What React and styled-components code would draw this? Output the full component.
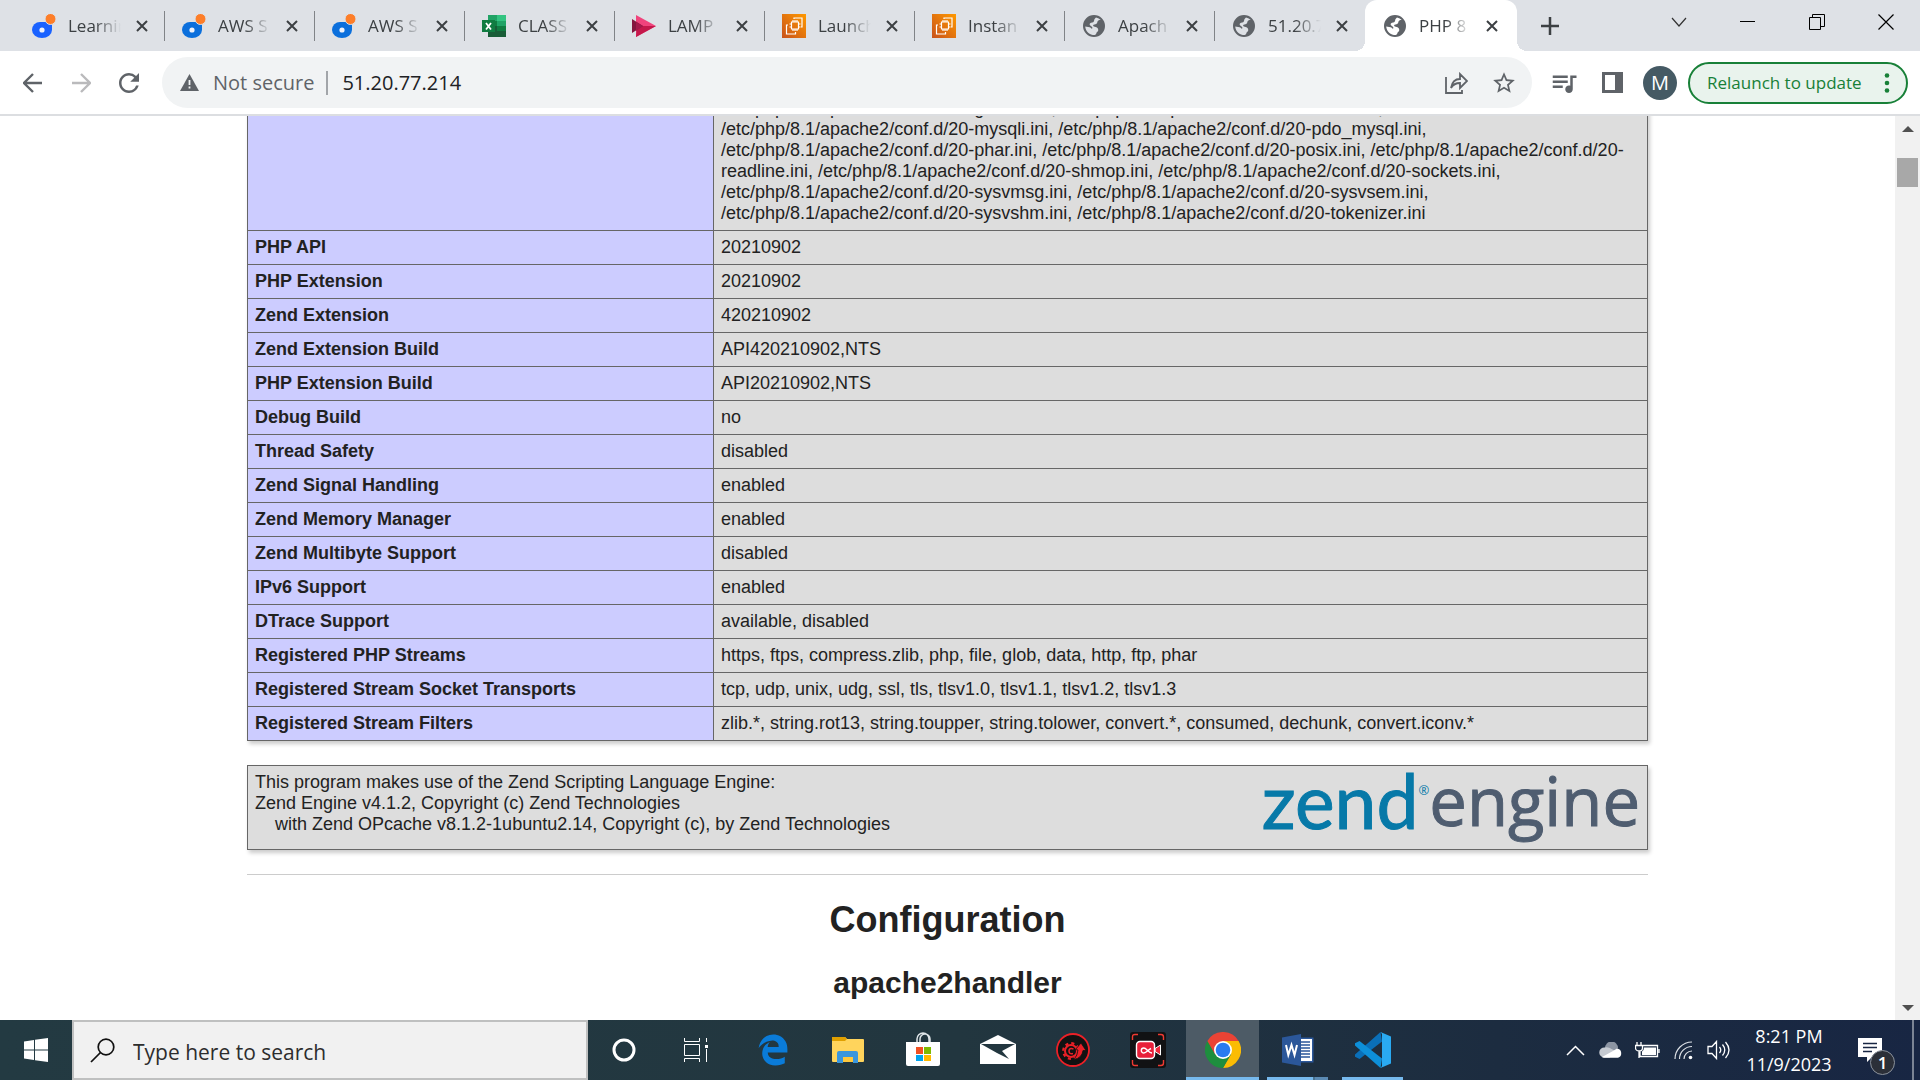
import React from 'react';
import styled, { createGlobalStyle, css } from 'styled-components';
import { FaEdgeLegacy } from 'react-icons/fa';
import { MdQueueMusic, MdStarBorder, MdRefresh } from 'react-icons/md';

const uiFont = "'Open Sans', 'Noto Sans', sans-serif";
const pageFont = "'Liberation Sans', Arial, Helvetica, sans-serif";

const GlobalStyle = createGlobalStyle`
  *, *::before, *::after { box-sizing: border-box; }
  body { margin: 0; background: #fff; color: #222; font-family: ${pageFont}; }
  button { font: inherit; color: inherit; border: 0; padding: 0; margin: 0; background: none; cursor: pointer; }
  input { font: inherit; color: inherit; border: 0; padding: 0; margin: 0; background: none; outline: 0; }
  svg { display: block; flex: none; }
`;

const Screen = styled.div`
  display: flex;
  flex-direction: column;
  height: 100vh;
  overflow: hidden;
`;

/* ---------- tab strip ---------- */

const TabStrip = styled.header`
  display: flex;
  flex: none;
  height: 51px;
  padding-left: 15px;
  background: #dee1e6;
  font-family: ${uiFont};
`;

const Tabs = styled.div`
  display: flex;
`;

const Tab = styled.div`
  position: relative;
  display: flex;
  align-items: center;
  width: 150px;
  padding: 1px 16px 0 17px;
  color: #3c4043;

  ${({ $divider }) => $divider && css`
    &::after {
      content: '';
      position: absolute;
      right: 0;
      top: 11px;
      width: 1px;
      height: 30px;
      background: #808387;
    }
  `}

  ${({ $active }) => $active && css`
    width: 152px;
    padding: 1px 18px 0 18px;
    background: #fff;
    border-radius: 12px 12px 0 0;
    &::before, &::after {
      content: '';
      position: absolute;
      bottom: 0;
      width: 10px;
      height: 10px;
    }
    &::before { left: -10px; background: radial-gradient(circle at 0 0, transparent 10px, #fff 10px); }
    &::after { right: -10px; background: radial-gradient(circle at 100% 0, transparent 10px, #fff 10px); }
  `}
`;

const TabTitle = styled.span`
  flex: 1;
  min-width: 0;
  margin: 0 14px 0 12px;
  overflow: hidden;
  white-space: nowrap;
  font-size: 17px;
  line-height: 24px;
  mask-image: linear-gradient(90deg, #000 50%, transparent 100%);
`;

const CloseTab = styled.button`
  width: 14px;
  height: 24px;
  display: grid;
  place-items: center;
`;

const NewTab = styled.button`
  width: 66px;
  display: grid;
  place-items: center;
  color: #3c4043;
`;

const WindowControls = styled.div`
  display: flex;
  margin-left: auto;
`;

const WindowButton = styled.button`
  width: 69px;
  height: 43px;
  display: grid;
  place-items: center;
`;

/* ---------- toolbar ---------- */

const Toolbar = styled.div`
  display: flex;
  align-items: center;
  flex: none;
  height: 65px;
  padding: 0 12px 0 9px;
  background: #fff;
  border-bottom: 2px solid #dcdee1;
  font-family: ${uiFont};
  font-size: 20px;
`;

const NavButton = styled.button`
  width: 48px;
  height: 48px;
  display: grid;
  place-items: center;
  color: ${({ $muted }) => ($muted ? '#bababc' : '#5f6368')};
`;

const Omnibox = styled.div`
  display: flex;
  align-items: center;
  flex: 1;
  height: 51px;
  margin-left: 9px;
  padding: 0 4px 0 18px;
  border-radius: 26px;
  background: #f1f3f4;
`;

const Security = styled.button`
  display: flex;
  align-items: center;
  gap: 14px;
  padding-right: 12px;
  border-right: 2px solid #a2a5a9;
  line-height: 24px;
  color: #5f6368;
`;

const Address = styled.input`
  flex: 1;
  min-width: 0;
  padding-left: 14px;
  color: #202124;
`;

const ToolGroup = styled.div`
  display: flex;
  align-items: center;
  padding-left: 8px;
`;

const Avatar = styled.button`
  width: 34px;
  height: 34px;
  margin: 0 11px 0 7px;
  border-radius: 50%;
  background: #455a64;
  color: #fff;
  font-size: 20px;
  line-height: 34px;
`;

const Relaunch = styled.button`
  display: flex;
  align-items: center;
  justify-content: space-between;
  width: 220px;
  height: 42px;
  padding: 0 16px 0 17px;
  border: 2px solid #188038;
  border-radius: 21px;
  background: #e9f3ed;
  color: #188038;
  font-size: 17px;
  white-space: nowrap;
`;

/* ---------- page ---------- */

const Viewport = styled.div`
  display: flex;
  flex: 1;
  min-height: 0;
  background: #fff;
`;

const Page = styled.main`
  flex: 1;
  min-width: 0;
  overflow: hidden;
  font-size: 18px;
  line-height: 21px;
`;

/* The document is scrolled part of the way through its first row. */
const Document = styled.div`
  max-width: 1401px;
  margin: -25px auto 0;
`;

const InfoTable = styled.table`
  width: 100%;
  border-collapse: collapse;
  box-shadow: 2px 3px 4px #ccc;
  margin-bottom: 24px;
  table-layout: fixed;
`;

const cell = css`
  padding: 6px 7px;
  border: 1px solid #666;
  vertical-align: baseline;
  text-align: left;
`;

const Name = styled.th`
  ${cell}
  width: 466px;
  background: #ccf;
  font-weight: bold;
`;

const Value = styled.td`
  ${cell}
  background: #ddd;
`;

const EngineBox = styled.section`
  display: flex;
  justify-content: space-between;
  padding: 6px 7px;
  border: 1px solid #666;
  background: #ddd;
  box-shadow: 2px 3px 4px #ccc;
`;

const EngineText = styled.p`
  margin: 0;
`;

const Indented = styled.span`
  padding-left: 20px;
`;

const EngineLogo = styled.a`
  display: flex;
  height: 71px;
  text-decoration: none;
  line-height: 56px;
  white-space: nowrap;
`;

const LogoZend = styled.span`
  font-family: Lato, sans-serif;
  font-size: 75px;
  color: #0779a8;
  -webkit-text-stroke: 1px #0779a8;
`;

const LogoMark = styled.span`
  font-family: ${uiFont};
  font-size: 13px;
  line-height: 36px;
  color: #0779a8;
`;

const LogoEngine = styled.span`
  font-family: 'Open Sans', sans-serif;
  font-size: 67px;
  color: #4f5d70;
  -webkit-text-stroke: 1px #4f5d70;
`;

const Rule = styled.hr`
  height: 1px;
  margin: 24px 0;
  border: 0;
  background: #ccc;
`;

const Heading = styled.h1`
  margin: 0 0 24px;
  font-size: 36px;
  line-height: 42px;
  text-align: center;
`;

const SubHeading = styled.h2`
  margin: 0;
  font-size: 30px;
  line-height: 35px;
  text-align: center;
`;

const ScrollBar = styled.div`
  display: flex;
  flex-direction: column;
  align-items: center;
  flex: none;
  width: 25px;
  background: #f1f1f1;
`;

const ScrollButton = styled.button`
  width: 25px;
  height: 25px;
  display: grid;
  place-items: center;
`;

const ScrollTrack = styled.div`
  flex: 1;
  padding-top: 17px;
`;

const ScrollThumb = styled.div`
  width: 21px;
  height: 29px;
  background: #a8a8a8;
`;

/* ---------- taskbar ---------- */

const Taskbar = styled.footer`
  display: flex;
  flex: none;
  height: 60px;
  background: linear-gradient(90deg, #233a42 0%, #22363f 50%, #1c2c40 78%, #182643 100%);
  color: #fff;
  font-family: ${uiFont};
`;

const PinnedApps = styled.nav`
  display: flex;
  gap: 2px;
  padding-left: 4px;
`;

const TaskButton = styled.button`
  position: relative;
  display: grid;
  place-items: center;
  width: ${({ $pinned }) => ($pinned ? '73px' : '72px')};
  height: 60px;
  background: ${({ $active }) => ($active ? '#4d5b66' : 'none')};

  ${({ $running, $active, $stacked }) => ($running || $active) && css`
    &::after {
      content: '';
      position: absolute;
      bottom: 0;
      left: ${$active ? 0 : '6px'};
      right: ${$active ? 0 : '6px'};
      height: 3px;
      background: ${$stacked ? 'linear-gradient(90deg, #76b9ed 46px, #4a7390 46px, #4a7390 48px, #5b8ab3 48px)' : '#76b9ed'};
    }
  `}
`;

const Search = styled.label`
  display: flex;
  align-items: center;
  gap: 18px;
  width: 516px;
  padding: 0 16px;
  border: 2px solid #bfc0c0;
  background: #f1f1f1;
  color: #222;
`;

const SearchInput = styled.input`
  flex: 1;
  min-width: 0;
  padding-top: 3px;
  font-size: 21px;
  &::placeholder { color: #2d2d2d; opacity: 1; }
`;

const Tray = styled.div`
  display: flex;
  align-items: center;
  margin-left: auto;
`;

const TrayButton = styled.button`
  width: 36px;
  height: 60px;
  display: grid;
  place-items: center;
`;

const Clock = styled.button`
  width: 104px;
  font-size: 18px;
  line-height: 28px;
  text-align: center;
`;

const Notifications = styled.button`
  position: relative;
  width: 71px;
  height: 60px;
  padding-left: 17px;
`;

const Badge = styled.span`
  position: absolute;
  left: 29px;
  top: 30px;
  width: 25px;
  height: 25px;
  border: 1px solid #8b929c;
  border-radius: 50%;
  background: #2b2f38;
  font-size: 17px;
  font-weight: 600;
  line-height: 23px;
  text-align: center;
`;

const ShowDesktop = styled.button`
  width: 8px;
  height: 60px;
  border-left: 2px solid #7b8494;
`;

/* ---------- drawings ---------- */

const DropIcon = ({ color }) => (
  <svg width="24" height="24" viewBox="0 0 24 24">
    <path d="M0 16a8 8 0 0 1 8-8h9q3 0 3 3v5a10 8 0 0 1-20 0z" fill={color} />
    <circle cx="18.500" cy="5" r="5.500" fill="#fd7e29" stroke="#dee1e6" strokeWidth="1" />
    <circle cx="10" cy="16" r="2.600" fill="#eef2fb" />
  </svg>
);

const ExcelIcon = () => (
  <svg width="24" height="24" viewBox="0 0 24 24">
    <path d="M6 1h9v6H6z" fill="#21a366" /><path d="M15 1h9v6h-9z" fill="#33c481" />
    <path d="M6 7h9v5H6z" fill="#107c41" /><path d="M15 7h9v5h-9z" fill="#21a366" />
    <path d="M6 12h9v11H6z" fill="#185c37" /><path d="M15 12h9v5h-9z" fill="#107c41" /><path d="M15 17h9v6h-9z" fill="#185c37" />
    <path d="M0 6h13v12H0z" fill="#107c41" />
    <path d="M4 9l5 6.500M9 9l-5 6.500" stroke="#fff" strokeWidth="1.800" />
  </svg>
);

const LampIcon = () => (
  <svg width="24" height="24" viewBox="0 0 24 24">
    <path d="M4 1l20 11L4 23z" fill="#f0437c" /><path d="M5 12h19L4 23z" fill="#c4184b" />
    <path d="M0 5l11 7L0 19z" fill="#84163f" /><path d="M4 8l7 4-7 5z" fill="#a3194b" />
  </svg>
);

const AwsIcon = () => (
  <svg width="24" height="24" viewBox="0 0 24 24">
    <defs><linearGradient id="aws" x1="0" y1="1" x2="1" y2="0"><stop stopColor="#c8511b" /><stop offset="1" stopColor="#f90" /></linearGradient></defs>
    <path d="M0 0h24v24H0z" fill="url(#aws)" />
    <path d="M9.500 8h7v7h-7zM11 6v2m2-2v2m2-2v2m-4 7v2m2-2v2m2-2v2M7.500 10h2m-2 3h2m7-3h2m-2 3h2M12 5V4h8v9h-1M6 11H4.500v9h9v-2" fill="none" stroke="#fff" strokeWidth="1.200" />
  </svg>
);

const GlobeIcon = () => (
  <svg width="24" height="24" viewBox="0 0 24 24">
    <path fillRule="evenodd" fill="#5f6368" d="M12 1a11 11 0 1 1 0 22a11 11 0 0 1 0-22zM14 3.500c2 .4 3.500 1.300 4.700 2.500-2 0-3.200.6-3.400 2.300-.1 1.500-1.300 2-2.800 2.300-1.700.3-1.800 1.400-.6 2 2.600.4 4.200 1.300 4.400 3.400-.1 1.600-1.600 1.800-1.900 3.100-.1 1-.8 1.600-1.700 2C7.600 21 3.600 17.500 3.200 12.500l3 .4c2.200.4 3.300 1 3.500 2 .8-.6 1-1.500.1-2.200L8 11.300c-.7-1-.3-2.300 1-2.600 1.700-.3 3-.6 3.100-2 0-1.300.8-2.300 1.900-3.200z" />
  </svg>
);

const Cross = ({ size = 12, width = 2, color = '#3c4043' }) => (
  <svg width={size} height={size} viewBox="0 0 12 12"><path d="M1 1l10 10M11 1L1 11" stroke={color} strokeWidth={width} /></svg>
);

const Arrow = ({ flip }) => (
  <svg width="20" height="20" viewBox="0 0 20 20">
    <path d={flip ? 'M1 10h17M10 1l9 9-9 9' : 'M19 10H2M10 1l-9 9 9 9'} fill="none" stroke="currentColor" strokeWidth="2.400" />
  </svg>
);

const tabs = [
  { title: 'Learnin', icon: <DropIcon color="#1a62ff" /> },
  { title: 'AWS S', icon: <DropIcon color="#0b6fdc" /> },
  { title: 'AWS S', icon: <DropIcon color="#0b6fdc" /> },
  { title: 'CLASS', icon: <ExcelIcon /> },
  { title: 'LAMP', icon: <LampIcon /> },
  { title: 'Launch', icon: <AwsIcon /> },
  { title: 'Instan', icon: <AwsIcon /> },
  { title: 'Apach', icon: <GlobeIcon /> },
  { title: '51.20.7', icon: <GlobeIcon /> },
  { title: 'PHP 8', icon: <GlobeIcon />, active: true },
];

const iniFiles = ['gettext', 'iconv', 'mysqli', 'pdo_mysql', 'phar', 'posix', 'readline', 'shmop', 'sockets', 'sysvmsg', 'sysvsem', 'sysvshm', 'tokenizer']
  .map((name) => `/etc/php/8.1/apache2/conf.d/20-${name}.ini`)
  .join(', ');

const rows = [
  ['PHP API', '20210902'],
  ['PHP Extension', '20210902'],
  ['Zend Extension', '420210902'],
  ['Zend Extension Build', 'API420210902,NTS'],
  ['PHP Extension Build', 'API20210902,NTS'],
  ['Debug Build', 'no'],
  ['Thread Safety', 'disabled'],
  ['Zend Signal Handling', 'enabled'],
  ['Zend Memory Manager', 'enabled'],
  ['Zend Multibyte Support', 'disabled'],
  ['IPv6 Support', 'enabled'],
  ['DTrace Support', 'available, disabled'],
  ['Registered PHP Streams', 'https, ftps, compress.zlib, php, file, glob, data, http, ftp, phar'],
  ['Registered Stream Socket Transports', 'tcp, udp, unix, udg, ssl, tls, tlsv1.0, tlsv1.1, tlsv1.2, tlsv1.3'],
  ['Registered Stream Filters', 'zlib.*, string.rot13, string.toupper, string.tolower, convert.*, consumed, dechunk, convert.iconv.*'],
];

const FolderIcon = () => (
  <svg width="34" height="28" viewBox="0 0 34 28">
    <path d="M1 1h13l2 2h16q1 0 1 1v21q0 1-1 1H2q-1 0-1-1z" fill="#ffd45c" /><path d="M1 1h13l2 2-2 2H1z" fill="#e0a000" />
    <path d="M6 27V17q0-2 2-2h17q2 0 2 2v10h-5v-6H12v6z" fill="#3a96dd" /><path d="M12 21h10v5H12z" fill="#ffc83c" />
  </svg>
);

const StoreIcon = () => (
  <svg width="36" height="36" viewBox="0 0 36 36">
    <path d="M12 11V7a6 6 0 0 1 12 0v4M15 11V7a5 5 0 0 1 10 0v4" fill="none" stroke="#dfe5e8" strokeWidth="1.500" />
    <path d="M1 10h34v22q0 2-2 2H3q-2 0-2-2z" fill="#fff" />
    <path d="M11 15h7v7h-7z" fill="#f25022" /><path d="M19 15h7v7h-7z" fill="#7fba00" />
    <path d="M11 23h7v6h-7z" fill="#00a4ef" /><path d="M19 23h7v6h-7z" fill="#ffb900" />
  </svg>
);

const MailIcon = () => (
  <svg width="36" height="30" viewBox="0 0 36 30">
    <path d="M0 9L18 0l18 9v20H0z" fill="#fff" /><path d="M1 9h34L22 16l7 8L17 18z" fill="#22363f" />
  </svg>
);

const BoosterIcon = () => (
  <svg width="34" height="34" viewBox="0 0 34 34">
    <circle cx="17" cy="17" r="16" fill="#121212" stroke="#ec2027" strokeWidth="1.800" />
    <circle cx="15" cy="18" r="6" fill="none" stroke="#ec2027" strokeWidth="2" />
    <circle cx="15" cy="18" r="7.800" fill="none" stroke="#ec2027" strokeWidth="2.200" strokeDasharray="3.100 3.030" />
    <path d="M19.500 16.500l5.500-6.500 5 7.500h-3q-1 7.500-9 9 3.500-4 4-9.500z" fill="#ec2027" stroke="#121212" strokeWidth=".8" />
    <path d="M17.500 16q-4.500-1.500-4.500 2t4 2.500" fill="none" stroke="#ec2027" strokeWidth="1.500" />
  </svg>
);

const RecorderIcon = () => (
  <svg width="36" height="36" viewBox="0 0 36 36">
    <rect width="36" height="36" rx="3" fill="#111214" />
    <path d="M2.500 8V5q0-2.500 2.500-2.500h3M28 2.500h3q2.500 0 2.500 2.500v3M33.500 28v3q0 2.500-2.500 2.500h-3M8 33.500H5Q2.500 33.500 2.500 31v-3" fill="none" stroke="#f03a32" strokeWidth="1.400" />
    <path d="M25 16.500l5.500-3.500v10L25 19.500z" fill="#ee2a3b" stroke="#fff" strokeWidth="1" />
    <rect x="6.500" y="9.500" width="18" height="17" rx="3.500" fill="#e8213a" stroke="#fff" strokeWidth="1.400" />
    <path d="M22 21c-3.500 0-5.500-5-8.200-5a2.500 2.500 0 0 0 0 5c2.700 0 4.200-3.200 7.200-4.500" fill="none" stroke="#fff" strokeWidth="1.400" />
  </svg>
);

const ChromeIcon = () => (
  <svg width="36" height="36" viewBox="0 0 36 36">
    <path d="M18 18V9h15.600A18 18 0 0 1 18 36l7.800-13.500z" fill="#fbbc04" />
    <path d="M18 18l7.800 4.500L18 36A18 18 0 0 1 2.400 9l7.800 13.500z" fill="#1e8e3e" />
    <path d="M2.400 9L10.200 22.500 18 9z" fill="#1e8e3e" /><path d="M2.400 9a18 18 0 0 1 31.200 0H18l-7.800 13.500z" fill="#ea4335" />
    <circle cx="18" cy="18" r="9" fill="#fff" /><circle cx="18" cy="18" r="7.300" fill="#2a7bf0" />
  </svg>
);

const WordIcon = () => (
  <svg width="32" height="32" viewBox="0 0 32 32">
    <path d="M18 3.500h13.500v25H18z" fill="#2b579a" /><path d="M18 5h12v22H18z" fill="#fff" />
    <path d="M19 8h9M19 11h9M19 14h9M19 17h9M19 20h9M19 23h9" stroke="#2b579a" strokeWidth="1.500" />
    <path d="M0 3.500L19 0v32L0 28.500z" fill="#2b579a" />
    <path d="M4 11l2.300 10L9.500 11l3 10L15 11" fill="none" stroke="#fff" strokeWidth="2" />
  </svg>
);

const CodeIcon = () => (
  <svg width="36" height="36" viewBox="0 0 36 36">
    <path d="M27 9.500L4.500 27 0 24.800v-2.300L25.500 0z" fill="#0a6fb8" />
    <path d="M27 26.500L4.500 9 0 11.200v2.300L25.500 36z" fill="#0d8fd9" />
    <path d="M25.500 0L36 4.500v27L25.500 36l1.500-2V2z" fill="#2aaaf2" />
  </svg>
);

const TaskViewIcon = () => (
  <svg width="24" height="24" viewBox="0 0 24 24">
    <path d="M.5 0v3.500h15V0M.5 24v-3.500h15V24M.5 6.500h15v11H.5zM22.500 0v4m0 7v13" fill="none" stroke="#fff" strokeWidth="1" />
    <path d="M21 7h3v3h-3z" fill="#fff" />
  </svg>
);

export default function App() {
  return (
    <Screen>
      <GlobalStyle />
      <TabStrip>
        <Tabs>
          {tabs.map((tab, i) => (
            <Tab key={i} $active={tab.active} $divider={i < 8}>
              {tab.icon}
              <TabTitle>{tab.title}</TabTitle>
              <CloseTab aria-label="Close tab"><Cross /></CloseTab>
            </Tab>
          ))}
        </Tabs>
        <NewTab aria-label="New tab">
          <svg width="18" height="18" viewBox="0 0 18 18"><path d="M9 0v18M0 9h18" stroke="currentColor" strokeWidth="2.500" /></svg>
        </NewTab>
        <WindowControls>
          <WindowButton aria-label="Search tabs">
            <svg width="16" height="10" viewBox="0 0 16 10"><path d="M1 1l7 8 7-8" fill="none" stroke="#333" strokeWidth="1.200" /></svg>
          </WindowButton>
          <WindowButton aria-label="Minimize">
            <svg width="15" height="2" viewBox="0 0 15 2"><path d="M0 .5h15" stroke="#000" /></svg>
          </WindowButton>
          <WindowButton aria-label="Restore">
            <svg width="16" height="16" viewBox="0 0 16 16"><path d="M.5 3.500h11v12H.5zM3.500 3.500v-3h12v12h-4" fill="none" stroke="#000" /></svg>
          </WindowButton>
          <WindowButton aria-label="Close"><Cross size={18} width={0.8} color="#000" /></WindowButton>
        </WindowControls>
      </TabStrip>

      <Toolbar>
        <NavButton aria-label="Back"><Arrow /></NavButton>
        <NavButton aria-label="Forward" $muted><Arrow flip /></NavButton>
        <NavButton aria-label="Reload"><MdRefresh size={30} /></NavButton>
        <Omnibox>
          <Security>
            <svg width="19" height="17" viewBox="0 0 19 17"><path d="M9.500 0L19 17H0z" fill="#5f6368" /><path d="M9.500 6v5m0 1.500v2" stroke="#f1f3f4" strokeWidth="1.800" /></svg>
            Not secure
          </Security>
          <Address aria-label="Address" defaultValue="51.20.77.214" />
          <NavButton aria-label="Share">
            <svg width="23" height="22" viewBox="0 0 23 22"><path d="M1 5v16h16v-3M6 16C7 10 10 7 15 7V2l7 7-7 7v-5c-4 0-7 1.500-9 5z" fill="none" stroke="currentColor" strokeWidth="1.800" /></svg>
          </NavButton>
          <NavButton aria-label="Bookmark"><MdStarBorder size={26} /></NavButton>
        </Omnibox>
        <ToolGroup>
          <NavButton aria-label="Media"><MdQueueMusic size={30} /></NavButton>
          <NavButton aria-label="Side panel">
            <svg width="21" height="21" viewBox="0 0 21 21"><path fillRule="evenodd" d="M0 0h21v21H0zM3 3v15h10V3z" fill="currentColor" /></svg>
          </NavButton>
          <Avatar>M</Avatar>
          <Relaunch>
            Relaunch to update
            <svg width="6" height="20" viewBox="0 0 6 20"><g fill="currentColor"><circle cx="3" cy="2.500" r="2.300" /><circle cx="3" cy="10" r="2.300" /><circle cx="3" cy="17.500" r="2.300" /></g></svg>
          </Relaunch>
        </ToolGroup>
      </Toolbar>

      <Viewport>
        <Page>
          <Document>
            <InfoTable>
              <tbody>
                <tr><Name as="td" /><Value>{iniFiles}</Value></tr>
                {rows.map(([name, value]) => (
                  <tr key={name}><Name scope="row">{name}</Name><Value>{value}</Value></tr>
                ))}
              </tbody>
            </InfoTable>
            <EngineBox>
              <EngineText>
                This program makes use of the Zend Scripting Language Engine:<br />
                Zend Engine v4.1.2, Copyright (c) Zend Technologies<br />
                <Indented>with Zend OPcache v8.1.2-1ubuntu2.14, Copyright (c), by Zend Technologies</Indented>
              </EngineText>
              <EngineLogo href="#zend"><LogoZend>zend</LogoZend><LogoMark>®</LogoMark><LogoEngine>engine</LogoEngine></EngineLogo>
            </EngineBox>
            <Rule />
            <Heading>Configuration</Heading>
            <SubHeading>apache2handler</SubHeading>
          </Document>
        </Page>
        <ScrollBar>
          <ScrollButton aria-label="Scroll up"><svg width="12" height="6" viewBox="0 0 12 6"><path d="M6 0l6 6H0z" fill="#505050" /></svg></ScrollButton>
          <ScrollTrack><ScrollThumb /></ScrollTrack>
          <ScrollButton aria-label="Scroll down"><svg width="12" height="6" viewBox="0 0 12 6"><path d="M0 0h12L6 6z" fill="#505050" /></svg></ScrollButton>
        </ScrollBar>
      </Viewport>

      <Taskbar>
        <TaskButton aria-label="Start">
          <svg width="24" height="24" viewBox="0 0 24 24"><path d="M0 3.400l10-1.400v9.500H0zM11 1.800L24 0v11.500H11zM0 12.500h10V22L0 20.600zM11 12.500h13V24l-13-1.800z" fill="#fff" /></svg>
        </TaskButton>
        <Search>
          <svg width="25" height="25" viewBox="0 0 25 25"><circle cx="16" cy="9" r="7.800" fill="none" stroke="#111" strokeWidth="1.700" /><path d="M10.500 14.500L1 24" stroke="#111" strokeWidth="1.700" /></svg>
          <SearchInput aria-label="Search" placeholder="Type here to search" />
        </Search>
        <TaskButton aria-label="Cortana"><svg width="24" height="24" viewBox="0 0 24 24"><circle cx="12" cy="12" r="10" fill="none" stroke="#fff" strokeWidth="3" /></svg></TaskButton>
        <TaskButton aria-label="Task view"><TaskViewIcon /></TaskButton>
        <PinnedApps>
          <TaskButton $pinned aria-label="Edge"><FaEdgeLegacy size={32} color="#0a7bd8" /></TaskButton>
          <TaskButton $pinned aria-label="File Explorer"><FolderIcon /></TaskButton>
          <TaskButton $pinned aria-label="Store"><StoreIcon /></TaskButton>
          <TaskButton $pinned aria-label="Mail"><MailIcon /></TaskButton>
          <TaskButton $pinned aria-label="Driver Booster"><BoosterIcon /></TaskButton>
          <TaskButton $pinned aria-label="Screen Recorder"><RecorderIcon /></TaskButton>
          <TaskButton $pinned $active aria-label="Chrome"><ChromeIcon /></TaskButton>
          <TaskButton $pinned $running $stacked aria-label="Word"><WordIcon /></TaskButton>
          <TaskButton $pinned $running aria-label="Visual Studio Code"><CodeIcon /></TaskButton>
        </PinnedApps>
        <Tray>
          <TrayButton aria-label="Show hidden icons"><svg width="19" height="11" viewBox="0 0 19 11"><path d="M1 10l8.500-8.500L18 10" fill="none" stroke="#fff" strokeWidth="1.500" /></svg></TrayButton>
          <TrayButton aria-label="OneDrive">
            <svg width="24" height="16" viewBox="0 0 24 16"><path d="M6 6a6.500 6.500 0 0 1 13 0l-5 5z" fill="#8c95a3" /><path d="M5 15.500A5 5 0 0 1 5.500 5.500q4-1 7 1.500l6 3-8 5.500z" fill="#c5cad1" /><path d="M3 15l11-6q2-1.500 4-2.500a4.800 4.800 0 0 1 1 9.300H5q-1.500 0-2-.8z" fill="#fff" /></svg>
          </TrayButton>
          <TrayButton aria-label="Battery">
            <svg width="25" height="18" viewBox="0 0 25 18"><path d="M8 4.500h14.500v11H5V10M24 8v4M2 1v3m4-3v3M.5 4.500h7v2.500a3.500 3 0 0 1-7 0zM4 10v7" fill="none" stroke="#fff" strokeWidth="1.300" /><path d="M9 6.500h12v7.500H7v-3.500q2-1 2-4z" fill="#fff" /></svg>
          </TrayButton>
          <TrayButton aria-label="Wi-Fi">
            <svg width="19" height="19" viewBox="0 0 19 19"><path d="M1 18A17 17 0 0 1 18 1M5.500 18A12.500 12.500 0 0 1 18 5.500M10 18a8 8 0 0 1 8-8" fill="none" stroke="#dfe3e8" strokeWidth="1.200" /><circle cx="16.500" cy="16.500" r="1.800" fill="#fff" /></svg>
          </TrayButton>
          <TrayButton aria-label="Volume">
            <svg width="24" height="20" viewBox="0 0 24 20"><path d="M1 6.500h4L9.500 1.500v17L5 13.500H1zM12.500 7q2.500 3 0 6M15.500 4.500q4.500 5.500 0 11M18.500 2q7 8 0 16" fill="none" stroke="#fff" strokeWidth="1.300" /></svg>
          </TrayButton>
          <Clock>8:21 PM<br />11/9/2023</Clock>
          <Notifications aria-label="Notifications">
            <svg width="24" height="24" viewBox="0 0 24 24"><path d="M0 0h24v19H14l-5 5v-5H0z" fill="#fff" /><path d="M5 5.500h14M5 9.500h14M5 13.500h9" stroke="#182643" strokeWidth="1.300" /></svg>
            <Badge>1</Badge>
          </Notifications>
          <ShowDesktop aria-label="Show desktop" />
        </Tray>
      </Taskbar>
    </Screen>
  );
}
